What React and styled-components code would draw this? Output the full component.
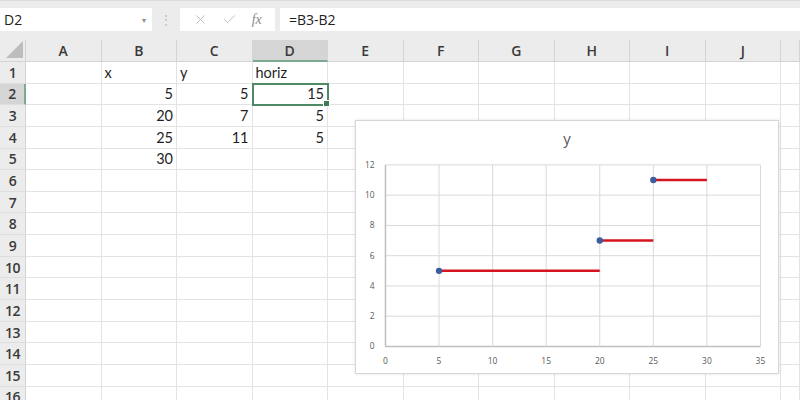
import styled, { createGlobalStyle } from "styled-components";
import { X, Check } from "lucide-react";

const GlobalStyle = createGlobalStyle`
  html, body {
    margin: 0;
    padding: 0;
    background: #fff;
    overflow: hidden;
  }
  body {
    font-family: "Open Sans", "Liberation Sans", sans-serif;
  }
`;

const COLS = ["A", "B", "C", "D", "E", "F", "G", "H", "I", "J", "K"];
const ROWS = 16;

// sheet content, keyed by row then column
const data = {
  1: { B: { v: "x" }, C: { v: "y" }, D: { v: "horiz" } },
  2: { B: { v: 5, n: true }, C: { v: 5, n: true }, D: { v: 15, n: true } },
  3: { B: { v: 20, n: true }, C: { v: 7, n: true }, D: { v: 5, n: true } },
  4: { B: { v: 25, n: true }, C: { v: 11, n: true }, D: { v: 5, n: true } },
  5: { B: { v: 30, n: true } },
};

const activeCol = "D";
const activeRow = 2;

// chart scale
const plot = { left: 28, right: 406, top: 12, bottom: 195 };
const sx = (v) => plot.left + (v * (plot.right - plot.left)) / 35;
const sy = (v) => plot.bottom - (v * (plot.bottom - plot.top)) / 12;

const points = [
  { x: 5, y: 5, to: 20 },
  { x: 20, y: 7, to: 25 },
  { x: 25, y: 11, to: 30 },
];

const App = () => {
  return (
    <Window>
      <GlobalStyle />
      <FormulaBar>
        <NameBox>
          <span>D2</span>
          <Caret>▾</Caret>
        </NameBox>
        <Dots>⋮</Dots>
        <ActionBox>
          <X size={15} strokeWidth={1.4} />
          <Check size={15} strokeWidth={1.4} />
          <Fx>fx</Fx>
        </ActionBox>
        <FormulaInput>=B3-B2</FormulaInput>
      </FormulaBar>

      <Sheet>
        <Corner />
        {COLS.map((c) => (
          <ColHeader key={c} $active={c === activeCol}>
            {/* K is only a sliver at the right edge, its letter is off screen */}
            {c === "K" ? "" : c}
          </ColHeader>
        ))}
        {Array.from({ length: ROWS }, (_, i) => i + 1).map((r) => (
          <Row key={r} r={r} />
        ))}
      </Sheet>

      <Chart>
        <ChartTitle>y</ChartTitle>
        <svg width="424" height="222" viewBox="0 0 424 222">
          {[0, 2, 4, 6, 8, 10, 12].map((v) => (
            <g key={"h" + v}>
              <line
                x1={plot.left}
                x2={plot.right}
                y1={sy(v)}
                y2={sy(v)}
                stroke={v === 0 ? "#bfbfbf" : "#d9d9d9"}
                strokeWidth={v === 0 ? 1.5 : 1}
              />
              <text
                x={plot.left - 11}
                y={sy(v) + 3}
                fontSize="8.5"
                fill="#595959"
                textAnchor="end"
                fontFamily="Open Sans, sans-serif"
              >
                {v}
              </text>
            </g>
          ))}
          {[0, 5, 10, 15, 20, 25, 30, 35].map((v) => (
            <g key={"v" + v}>
              <line
                x1={sx(v)}
                x2={sx(v)}
                y1={plot.top}
                y2={plot.bottom}
                stroke={v === 0 ? "#bfbfbf" : "#d9d9d9"}
                strokeWidth={v === 0 ? 1.5 : 1}
              />
              <text
                x={sx(v)}
                y={plot.bottom + 18}
                fontSize="8.5"
                fill="#595959"
                textAnchor="middle"
                fontFamily="Open Sans, sans-serif"
              >
                {v}
              </text>
            </g>
          ))}
          {points.map((p) => (
            <g key={p.x}>
              <line
                x1={sx(p.x)}
                x2={sx(p.to)}
                y1={sy(p.y)}
                y2={sy(p.y)}
                stroke="#d4141f"
                strokeWidth="2.6"
              />
              <circle cx={sx(p.x)} cy={sy(p.y)} r="3.2" fill="#3b5da0" />
            </g>
          ))}
        </svg>
      </Chart>
    </Window>
  );
};

const Row = ({ r }) => {
  const cells = data[r] || {};
  return (
    <>
      <RowHeader $active={r === activeRow}>{r}</RowHeader>
      {COLS.map((c) => {
        const cell = cells[c];
        return (
          <Cell
            key={c}
            $num={cell && cell.n}
            $selected={c === activeCol && r === activeRow}
          >
            {cell ? cell.v : ""}
          </Cell>
        );
      })}
    </>
  );
};

const Window = styled.div`
  position: relative;
  width: 800px;
  height: 400px;
  overflow: hidden;
  background: #fff;
`;

const FormulaBar = styled.div`
  display: flex;
  align-items: stretch;
  height: 23px;
  padding: 7px 0 9px;
  background: #ececec;
  border-top: 1px solid #dcdcdc;
  box-sizing: content-box;
`;

const NameBox = styled.div`
  width: 152px;
  display: flex;
  align-items: center;
  justify-content: space-between;
  padding: 0 6px 0 4px;
  box-sizing: border-box;
  background: #fff;
  font-size: 14px;
  color: #222;
`;

const Caret = styled.span`
  font-size: 8px;
  color: #8a8a8a;
`;

const Dots = styled.div`
  width: 28px;
  display: flex;
  align-items: center;
  justify-content: center;
  color: #c4c4c4;
  font-size: 14px;
`;

const ActionBox = styled.div`
  width: 95px;
  display: flex;
  align-items: center;
  justify-content: space-around;
  padding: 0 6px;
  box-sizing: border-box;
  background: #fff;
  color: #b8b8b8;
`;

const Fx = styled.span`
  font-family: "Liberation Serif", serif;
  font-style: italic;
  font-size: 14px;
  color: #8c8c8c;
`;

const FormulaInput = styled.div`
  flex: 1;
  margin-left: 5px;
  display: flex;
  align-items: center;
  padding: 0 9px;
  background: #fff;
  font-size: 14px;
  color: #222;
`;

const Sheet = styled.div`
  display: grid;
  grid-template-columns: 26px repeat(10, 75.5px) 1fr;
  grid-template-rows: 22px;
  grid-auto-rows: 21.65px;
`;

const Corner = styled.div`
  display: flex;
  align-items: flex-end;
  justify-content: flex-end;
  padding: 0 2px 3px 0;
  background: #ececec;
  border-right: 1px solid #d4d4d4;
  border-bottom: 1px solid #d4d4d4;
  box-sizing: border-box;

  &::after {
    content: "";
    width: 17px;
    height: 17px;
    background: #bdbdbd;
    clip-path: polygon(100% 0, 100% 100%, 0 100%);
  }
`;

const ColHeader = styled.div`
  display: flex;
  align-items: center;
  justify-content: center;
  background: ${(p) => (p.$active ? "#d5d5d5" : "#ececec")};
  border-right: 1px solid #d4d4d4;
  border-bottom: ${(p) => (p.$active ? "2px solid #7fa890" : "1px solid #d4d4d4")};
  box-sizing: border-box;
  font-size: 14px;
  font-weight: 600;
  color: #3a3a3a;
`;

const RowHeader = styled.div`
  display: flex;
  align-items: center;
  justify-content: center;
  background: ${(p) => (p.$active ? "#d5d5d5" : "#ececec")};
  border-right: ${(p) => (p.$active ? "2px solid #7fa890" : "1px solid #d4d4d4")};
  border-bottom: 1px solid #dedede;
  box-sizing: border-box;
  font-size: 14px;
  font-weight: 600;
  color: #3a3a3a;
  letter-spacing: -0.5px;
`;

const Cell = styled.div`
  position: relative;
  display: flex;
  align-items: center;
  justify-content: ${(p) => (p.$num ? "flex-end" : "flex-start")};
  padding: 0 3px;
  border-right: 1px solid #e3e3e3;
  border-bottom: 1px solid #e3e3e3;
  box-sizing: border-box;
  font-family: "Lato", "Open Sans", sans-serif;
  font-size: 14.5px;
  color: #1f1f1f;

  ${(p) =>
    p.$selected &&
    `
    z-index: 1;
    outline: 2px solid #4f8a66;
    outline-offset: -1px;
    &::after {
      content: "";
      position: absolute;
      right: -3px;
      bottom: -3px;
      width: 5px;
      height: 5px;
      background: #3f7a56;
      border: 1px solid #fff;
    }
  `}
`;

const Chart = styled.div`
  position: absolute;
  left: 355px;
  top: 120px;
  width: 424px;
  height: 254px;
  display: flex;
  flex-direction: column;
  background: #fff;
  border: 1px solid #d6d6d6;
  box-shadow: 0 0 3px rgba(0, 0, 0, 0.12);
  box-sizing: border-box;
  z-index: 2;
`;

const ChartTitle = styled.div`
  height: 32px;
  display: flex;
  align-items: center;
  justify-content: center;
  padding-top: 2px;
  box-sizing: border-box;
  font-size: 15px;
  color: #595959;
`;

export default App;
